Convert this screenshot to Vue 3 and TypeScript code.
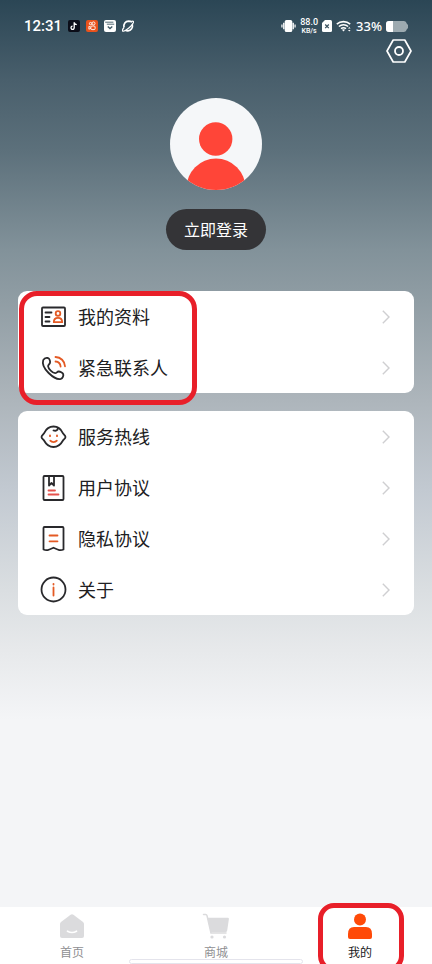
<script setup lang="ts">
type IconName = 'profile' | 'phone' | 'service' | 'book' | 'privacy' | 'about'

interface MenuItem {
  label: string
  icon: IconName
}

interface MenuGroup {
  id: string
  marked: boolean
  items: MenuItem[]
}

interface Tab {
  id: 'home' | 'mall' | 'mine'
  label: string
}

const groups: MenuGroup[] = [
  {
    id: 'personal',
    marked: true,
    items: [
      { label: '我的资料', icon: 'profile' },
      { label: '紧急联系人', icon: 'phone' },
    ],
  },
  {
    id: 'support',
    marked: false,
    items: [
      { label: '服务热线', icon: 'service' },
      { label: '用户协议', icon: 'book' },
      { label: '隐私协议', icon: 'privacy' },
      { label: '关于', icon: 'about' },
    ],
  },
]

const tabs: Tab[] = [
  { id: 'home', label: '首页' },
  { id: 'mall', label: '商城' },
  { id: 'mine', label: '我的' },
]

const activeTab: Tab['id'] = 'mine'
</script>

<template>
  <div class="page">
    <header class="status">
      <div class="status-left">
        <span class="clock">12:31</span>
        <svg class="app" viewBox="0 0 12 12" aria-hidden="true">
          <rect width="12" height="12" rx="2" fill="#0b0d18" />
          <path d="M6.2 2.2v5.6a1.6 1.6 0 1 1-1.6-1.6M6.2 2.4c.3 1.5 1.2 2.1 2.6 2.2" fill="none" stroke="#fff" stroke-width="1.3" />
        </svg>
        <svg class="app" viewBox="0 0 12 12" aria-hidden="true">
          <rect width="12" height="12" rx="2" fill="#e9521c" />
          <g fill="none" stroke="#fff" stroke-width="0.9">
            <circle cx="4.6" cy="3.6" r="1.2" />
            <circle cx="7.5" cy="3.4" r="1.5" />
            <rect x="4.9" y="6" width="4.2" height="3.6" rx="1" />
            <path d="M4.9 7.2 2.9 6.4v2.8l2-.8" />
          </g>
        </svg>
        <svg class="app" viewBox="0 0 12 12" aria-hidden="true">
          <rect width="12" height="12" rx="2" fill="#fff" />
          <path d="M1.2 2.2h8.2M2.8 4.2h7.4" fill="none" stroke="#405966" stroke-width="0.9" />
          <path d="M3.8 6.5 6 8.6l2.3-2.1" fill="none" stroke="#405966" stroke-width="1.4" />
        </svg>
        <svg class="app" viewBox="0 0 12 12" aria-hidden="true">
          <path d="M2 7.500C1.200 4 3.500 1.300 6.500 1.200c1.500 0 2.600.3 3.500 1M10.300 4.300c.8 3.500-1.300 6.300-4.300 6.500-1 .1-1.800-.1-2.500-.5" fill="none" stroke="#fff" stroke-width="1.700" />
          <path d="M2 7.500C.2 9.500-.2 11.500 1.600 11.200 4 10.800 10 6 11.300 2.800 12 .9 11 .8 9 1.600" fill="none" stroke="#fff" stroke-width="1.200" />
        </svg>
      </div>
      <div class="status-right">
        <svg class="vibrate" viewBox="0 0 16 14" aria-hidden="true">
          <rect x="4" y=".5" width="8" height="13" rx="1.800" fill="#fff" />
          <path d="M3 3.500v7M13 3.500v7" stroke="#fff" stroke-width="1.500" />
          <path d="M1 5.500v3M15 5.500v3" stroke="#fff" stroke-width="1.300" />
        </svg>
        <span class="speed"><span class="speed-value">88.0</span><span class="speed-unit">KB/s</span></span>
        <svg class="sim" viewBox="0 0 10 12" aria-hidden="true">
          <path d="M3 0h5.500A1.500 1.500 0 0 1 10 1.500v9A1.500 1.500 0 0 1 8.500 12h-7A1.500 1.500 0 0 1 0 10.500V3z" fill="#fff" />
          <path d="m3.200 4.500 3.600 3.600m0-3.600L3.200 8.100" stroke="#3b5360" stroke-width="1.300" />
        </svg>
        <svg class="wifi" viewBox="0 0 16 12" aria-hidden="true">
          <path d="M.8 4.200c3.700-3.400 9.600-3.400 13.400 0M2.900 6.500c2.600-2.300 6.600-2.300 9.200 0M5 8.700c1.500-1.200 3.500-1.200 5 0" fill="none" stroke="#fff" stroke-width="1.600" />
          <path d="M5.900 9.800 7.500 11.500l1.600-1.700c-.9-.7-2.300-.7-3.200 0z" fill="#fff" />
          <path d="m12 8.600 1.300-1.500 1.300 1.500zm0 1.500 1.300 1.500 1.300-1.500z" fill="#fff" />
        </svg>
        <span class="percent">33%</span>
        <svg class="battery" viewBox="0 0 22 11" aria-hidden="true">
          <path d="M3 0h15a3 3 0 0 1 2.700 2.500L22 4v3l-1.300 1.500A3 3 0 0 1 18 11H3a3 3 0 0 1-3-3V3a3 3 0 0 1 3-3z" fill="#9daab0" />
          <path d="M7 0v11H3a3 3 0 0 1-3-3V3a3 3 0 0 1 3-3z" fill="#fff" />
        </svg>
      </div>
    </header>

    <div class="toolbar">
      <button class="settings" type="button" aria-label="设置">
        <svg viewBox="0 0 26 24" aria-hidden="true">
          <path d="M7.200 1h11.600L25 12l-6.200 11H7.200L1 12z" fill="none" stroke="#fff" stroke-width="1.700" stroke-linejoin="round" />
          <circle cx="13" cy="12" r="4" fill="none" stroke="#fff" stroke-width="1.800" />
        </svg>
      </button>
    </div>

    <main class="content">
      <section class="account">
        <svg class="avatar" viewBox="0 0 92 92" aria-hidden="true">
          <defs>
            <clipPath id="avatar-clip"><circle cx="46" cy="46" r="46" /></clipPath>
          </defs>
          <g clip-path="url(#avatar-clip)">
            <rect width="92" height="92" fill="#f5f7f9" />
            <circle cx="45.700" cy="41" r="16.700" fill="#ff4538" />
            <circle cx="46" cy="90" r="29.500" fill="#ff4538" />
          </g>
        </svg>
        <button class="login" type="button">立即登录</button>
      </section>

      <nav v-for="group in groups" :key="group.id" class="card">
        <a v-for="item in group.items" :key="item.label" class="row" href="#">
          <svg class="row-icon" viewBox="0 0 28 28" aria-hidden="true">
            <g v-if="item.icon === 'profile'" class="ink">
              <rect x="2" y="4.500" width="23" height="18.500" rx="1" />
              <path d="M5.500 9.500h6M5.500 14h4M5.500 18.500h4" />
              <g class="accent">
                <circle cx="18" cy="10.500" r="2.300" />
                <path d="M13.800 19.200c0-3.300 1.800-4.400 4.200-4.400s4.200 1.100 4.200 4.400z" />
              </g>
            </g>
            <g v-else-if="item.icon === 'phone'" class="ink">
              <path d="M3.200 6.200C4 4.600 6.200 3.600 8 4c1.500.4 2.400 3.200 2 4.800-.3 1.400-2 2-1.900 3.400.2 2.600 4.400 6.800 7 7 1.400.1 2-1.500 3.400-1.700 1.600-.2 4.200 1.200 4.700 2.600.5 1.600-.5 4.300-2.400 4.800C14.500 26.300.6 14 3.200 6.200z" />
              <path class="accent" d="M15.500 3c5.300.2 9.200 4 9.500 9.300M15.500 7.500c3 .2 4.900 2.100 5.100 5" />
            </g>
            <g v-else-if="item.icon === 'service'" class="ink">
              <path d="M4.300 9.800C6.200 5.800 9.500 3.500 13.500 3.500s7.300 2.300 9.200 6.300c.6 1.200 2.800 2.800 2.800 4.200s-2 2.500-2.700 3.700C20.600 21.800 17.700 24 13.500 24s-7.100-2.200-9.300-6.300C3.500 16.500 1.500 15.400 1.500 14s2.200-3 2.800-4.200z" />
              <path d="M17.800 4.600c.3 2.500-1.600 3.700-4.300 2.900" />
              <path class="accent" d="M10 12.300v.9M17 12.300v.9M10.300 17.600c1.600 1.900 4.900 1.900 6.500 0" />
            </g>
            <g v-else-if="item.icon === 'book'" class="ink">
              <rect x="3.500" y="2" width="20" height="24" rx="1" />
              <path d="M9 2v9.500l2.500-2.500 2.500 2.500V2" />
              <path class="accent pink" d="M8.500 16.500h6.500M8.500 20.500h10" />
            </g>
            <g v-else-if="item.icon === 'privacy'" class="ink">
              <path d="M3.500 3a1 1 0 0 1 1-1h18a1 1 0 0 1 1 1v21.500c-3 1.400-5 .6-10-1.800-5 2.400-7 3.200-10 1.800z" />
              <path class="accent" d="M9.500 10.500h8M9.500 16.300h8" />
            </g>
            <g v-else class="ink">
              <circle cx="13.500" cy="13.500" r="12" />
              <path class="accent" d="M13.500 7.800v.8M13.500 11.500v8" />
            </g>
          </svg>
          <span class="row-label">{{ item.label }}</span>
          <svg class="chevron" viewBox="0 0 8 14" aria-hidden="true">
            <path d="m.8.800 6.200 6.200-6.200 6.200" fill="none" stroke="#cfcfd1" stroke-width="1.400" />
          </svg>
        </a>
        <span v-if="group.marked" class="mark mark-card" aria-hidden="true"></span>
      </nav>
    </main>

    <nav class="tabbar">
      <a v-for="tab in tabs" :key="tab.id" class="tab" :class="{ active: tab.id === activeTab }" href="#">
        <svg class="tab-icon" viewBox="0 0 28 28" aria-hidden="true">
          <g v-if="tab.id === 'home'">
            <path d="M12.600 2.700q1.400-1 2.800 0l9.600 7.300q1 .8 1 2v12q0 2-2 2H4q-2 0-2-2V12q0-1.200 1-2z" fill="#dbdbdd" />
            <path d="M9.500 19.200q4.500 2.600 9 0" fill="none" stroke="#fff" stroke-width="1.700" stroke-linecap="round" />
          </g>
          <g v-else-if="tab.id === 'mall'" fill="#dbdbdd">
            <path d="M1.500 2.500h2.200q1 0 1.300 1.100L9 21h15" fill="none" stroke="#dbdbdd" stroke-width="1.500" stroke-linecap="round" />
            <path d="M5.500 5.800h20.300q1.300 0 1.100 1.300l-1.700 11.500q-.2 1.700-1.900 1.700H8.700z" />
            <circle cx="10" cy="25" r="1.600" />
            <circle cx="22.500" cy="25" r="1.600" />
          </g>
          <g v-else fill="#ff4a08">
            <circle cx="14" cy="7.500" r="6" />
            <path d="M8 15h12q6 0 6 7v3q0 2-2 2H4q-2 0-2-2v-3q0-7 6-7z" />
          </g>
        </svg>
        <span>{{ tab.label }}</span>
        <span v-if="tab.id === activeTab" class="mark mark-tab" aria-hidden="true"></span>
      </a>
      <span class="home-indicator" aria-hidden="true"></span>
    </nav>
  </div>
</template>

<style>
body {
  margin: 0;
}
</style>

<style scoped>
.page {
  display: flex;
  flex-direction: column;
  box-sizing: border-box;
  min-height: 100vh;
  overflow: hidden;
  color: #202022;
  font-family: "Noto Sans", "Noto Sans CJK SC", sans-serif;
  background: #f4f5f7 linear-gradient(
    to bottom,
    #2b4655 0,
    #495f6c 80px,
    #5c707b 150px,
    #82929a 250px,
    #909da4 300px,
    #adb5bb 400px,
    #c2c9d1 490px,
    #dadee1 590px,
    #e7e9eb 650px,
    #f4f5f7 720px
  ) no-repeat;
}

.status {
  display: flex;
  justify-content: space-between;
  align-items: center;
  height: 24px;
  padding: 14px 24px 0;
  color: #fff;
}

.status-left,
.status-right {
  display: flex;
  align-items: center;
}

.status-left {
  gap: 6px;
}

.status-right {
  gap: 4px;
}

.clock {
  font: 500 15px/20px Roboto, sans-serif;
}

.app {
  width: 12px;
  height: 12px;
}

.vibrate {
  width: 15px;
  height: 14px;
}

.speed {
  display: flex;
  flex-direction: column;
  align-items: center;
  gap: 1px;
  font-family: Roboto, sans-serif;
  font-weight: 500;
}

.speed-value {
  font-size: 9px;
  line-height: 9px;
}

.speed-unit {
  font-size: 7px;
  line-height: 7px;
}

.sim {
  width: 10px;
  height: 12px;
}

.wifi {
  width: 16px;
  height: 12px;
}

.percent {
  font-size: 13px;
  font-weight: 500;
  line-height: 20px;
}

.battery {
  width: 22px;
  height: 11px;
}

.toolbar {
  display: flex;
  justify-content: flex-end;
  padding: 1px 20px 0;
}

.settings {
  display: flex;
  padding: 0;
  border: 0;
  background: none;
  cursor: pointer;
}

.settings svg {
  width: 26px;
  height: 24px;
}

.content {
  display: flex;
  flex: 1;
  flex-direction: column;
  gap: 18px;
  padding: 35px 18px 18px;
}

.account {
  display: flex;
  flex-direction: column;
  align-items: center;
  gap: 19px;
  padding-bottom: 23px;
}

.avatar {
  width: 92px;
  height: 92px;
}

.login {
  height: 41px;
  padding: 0 18px 2px;
  border: 0;
  border-radius: 21px;
  color: #fff;
  background: #343437;
  font: 400 16px/24px "Noto Sans CJK SC", sans-serif;
  cursor: pointer;
}

.card {
  position: relative;
  border-radius: 9px;
  background: #fff;
}

.row {
  display: flex;
  align-items: center;
  gap: 10px;
  height: 51px;
  padding: 0 24px 0 22px;
  color: inherit;
  text-decoration: none;
}

.row-icon {
  width: 28px;
  height: 28px;
}

.ink {
  fill: none;
  stroke: #29292c;
  stroke-width: 1.8;
  stroke-linecap: round;
  stroke-linejoin: round;
}

.accent {
  stroke: #e45a24;
}

.pink {
  stroke: #e5524d;
}

.row-label {
  flex: 1;
  padding-bottom: 2px;
  font: 400 18px/26px "Noto Sans CJK SC", sans-serif;
}

.chevron {
  width: 8px;
  height: 14px;
}

.mark {
  position: absolute;
  box-sizing: border-box;
  border: 5px solid #e81f29;
  pointer-events: none;
}

.mark-card {
  top: 0;
  bottom: -12px;
  left: 1px;
  width: 178px;
  border-radius: 18px;
}

.mark-tab {
  top: -4px;
  bottom: -8px;
  left: 50%;
  width: 86px;
  margin-left: -42px;
  border-radius: 16px;
}

.tabbar {
  position: relative;
  display: flex;
  height: 57px;
  background: #fff;
}

.tab {
  position: relative;
  display: flex;
  flex: 1;
  flex-direction: column;
  align-items: center;
  gap: 3px;
  padding-top: 5px;
  color: #8f8f92;
  font: 400 12px/18px "Noto Sans CJK SC", sans-serif;
  text-decoration: none;
}

.tab.active {
  color: #202022;
}

.tab-icon {
  width: 28px;
  height: 28px;
}

.home-indicator {
  position: absolute;
  bottom: 0;
  left: 50%;
  box-sizing: border-box;
  width: 174px;
  height: 5px;
  margin-left: -87px;
  border: 1px solid #e4e4ec;
  border-radius: 3px;
  background: #fff;
}
</style>
